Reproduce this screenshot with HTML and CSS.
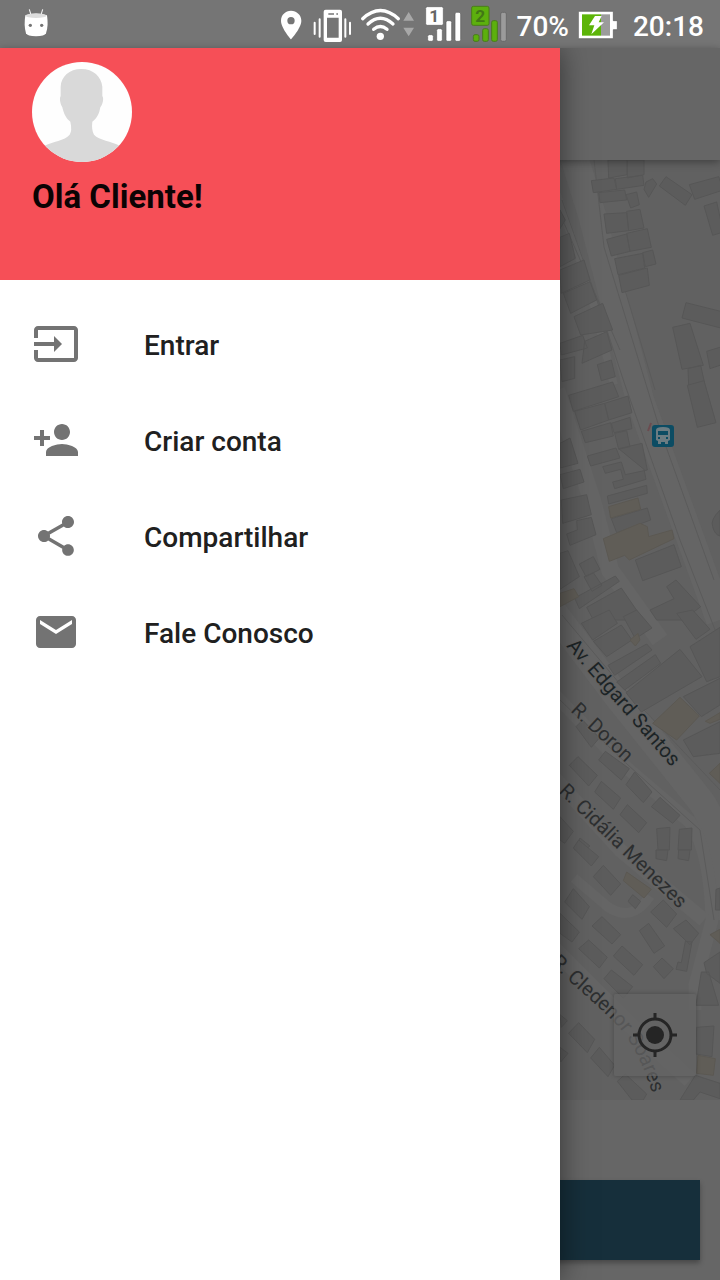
FILE: index.html
```html
<!DOCTYPE html>
<html lang="pt-BR">
<head>
<meta charset="utf-8">
<meta name="viewport" content="width=device-width, initial-scale=1">
<title>Menu</title>
<link rel="stylesheet" href="styles.css">
</head>
<body>
<div class="screen">
  <header class="status">
    <svg class="status-app" viewBox="66 0 84 144" aria-hidden="true">
      <path d="M88 28l5 17M128 28l-5 17" stroke="#fff" stroke-width="3"/>
      <path d="M76 46Q108 36 141 46Q146 78 138 100Q134 109 108 109Q82 109 78 100Q71 78 76 46Z" fill="#fff"/>
      <ellipse cx="108" cy="47" rx="31" ry="7" fill="#ddd"/>
      <circle cx="91" cy="76" r="5" fill="#757575"/><circle cx="125" cy="76" r="5" fill="#757575"/>
    </svg>
    <div class="status-icons">
      <svg width="28" height="48" viewBox="30 0 84 144" aria-hidden="true">
        <path fill="#fff" fill-rule="evenodd" d="M63 32C46 32 33 45 33 62C33 84 63 118 63 118S94 84 94 62C94 45 80 32 63 32ZM63 51a11 11 0 1 1 0 22a11 11 0 1 1 0-22Z"/>
      </svg>
      <svg width="48" height="48" viewBox="114 0 144 144" aria-hidden="true">
        <path d="M134 68v34M149 58v52M226 58v52M240 68v34" stroke="#fff" stroke-width="6" stroke-linecap="round"/>
        <path fill="#fff" fill-rule="evenodd" d="M167 29h43q6 0 6 6v85q0 6-6 6h-43q-6 0-6-6V35q0-6 6-6ZM171 53v60h35V53ZM175 40v4h17v-4ZM199 40v4h5v-4Z"/>
      </svg>
      <svg width="64" height="48" viewBox="258 0 192 144" aria-hidden="true">
        <g fill="none" stroke="#fff" stroke-width="10" stroke-linecap="round">
          <path d="M278 56Q331 7 385 56M294 72Q331 38 369 72M311 88Q331 71 351 88"/>
        </g>
        <circle cx="331" cy="109" r="11" fill="#fff"/>
        <path d="M416 36l16 26h-32ZM400 83h32l-16 26Z" fill="#a8a8a8"/>
      </svg>
      <svg class="sim" width="46" height="48" viewBox="450 0 138 144" aria-hidden="true">
        <g fill="#fff" stroke="#5d5d5d" stroke-width="2">
          <rect x="467" y="20" width="53" height="56" rx="5"/>
          <rect x="473" y="104" width="17" height="20" rx="5"/><rect x="500" y="86" width="17" height="38" rx="5"/><rect x="528" y="62" width="17" height="62" rx="5"/><rect x="555" y="37" width="17" height="87" rx="5"/>
        </g>
        <text x="493" y="67" fill="#666">1</text>
      </svg>
      <svg class="sim" width="48" height="48" viewBox="588 0 144 144" aria-hidden="true">
        <g fill="#5cb00d" stroke="#4a7d1b" stroke-width="3">
          <rect x="605" y="19" width="52" height="57" rx="5"/>
          <rect x="610" y="104" width="17" height="20" rx="5"/><rect x="638" y="86" width="17" height="38" rx="5"/><rect x="665" y="62" width="17" height="62" rx="5"/>
          <rect x="692" y="37" width="17" height="87" rx="5" fill="#9b9b9b" stroke="#696969"/>
        </g>
        <text x="631" y="67" fill="#427816">2</text>
      </svg>
    </div>
    <span>70%</span>
    <svg width="40" height="48" viewBox="354 0 120 144" aria-hidden="true">
      <path d="M355 34h105v28h12v27h-12v27H355Z" fill="#fff" stroke="#555" stroke-width="2"/>
      <path d="M366 43h57v64h-57Z" fill="#5cb408"/><path d="M423 43h27v64h-27Z" fill="#9b9b9b"/>
      <path d="M405 48h20l-9 19h16l-38 36l9-27h-16Z" fill="#fff"/>
    </svg>
    <time>20:18</time>
  </header>

  <div class="stage">
    <main class="page">
      <div class="toolbar"></div>
      <section class="map">
        <svg class="map-art" viewBox="0 160 720 940" preserveAspectRatio="xMaxYMin slice" role="img" aria-label="Mapa">
          <defs>
            <path id="cledenor" d="M550 963C580 992 596 1004 614 1022Q638 1046 653 1096V1110"/>
          </defs>
          <g class="roads">
            <path d="M572 150L592 215L640 400L720 620" stroke-width="28"/>
            <path d="M552 180L590 290L614 385" stroke-width="8"/>
            <path d="M556 390L592 500L610 570L660 640" stroke-width="18"/>
            <path d="M552 610L620 700L700 800Q724 830 720 920" stroke-width="27"/>
            <path d="M550 690L620 762L690 822Q710 850 712 920L695 985V1010" stroke-width="13"/>
            <path d="M552 775L620 850L704 920" stroke-width="14"/>
            <path d="M574 878L608 907Q632 923 650 896" stroke-width="10"/>
            <path d="M550 945L625 1020L690 1080" stroke-width="16"/>
          </g>
          <g class="lines">
            <path d="M594 160L604 247L660 430L714 580M562 200L592 285L625 385L680 540L719 640"/>
            <path d="M556 205L620 350M625 290L655 390"/>
            <path d="M562 615L625 690L720 790M560 700L628 765L700 830L714 920"/>
          </g>
          <g class="buildings" transform="translate(540 150) scale(.33333)">
            <path d="M204 30H262V74L206 84ZM262 30H312V74L262 84ZM154 92L222 84L230 118L160 128ZM226 86L308 76L312 106L230 118ZM176 128L254 120L260 150L180 158ZM258 134L290 126L298 164L272 174ZM318 96L338 86L350 102L326 142L312 118Z"/>
            <path d="M378 80L456 134L436 166L358 108ZM448 104L536 80L550 120L464 148ZM492 168L530 156L550 246L518 256Z"/>
            <path d="M192 192L260 188L266 242L200 250ZM260 184L300 178L312 234L266 242ZM200 268L260 252L270 304L214 318ZM260 250L322 236L334 292L270 304ZM224 326L308 310L314 354L234 374ZM308 308L338 300L348 342L316 350ZM236 376L322 354L328 406L246 428Z"/>
            <path d="M438 458L550 486V536L426 504ZM398 532L450 520L490 646L426 658ZM500 604L546 590V644L510 656ZM444 656L482 646L494 700L446 706Z"/>
            <path d="M60 180L76 210L60 236ZM60 262L88 250L106 325L60 350ZM60 360L132 330L150 390L64 430ZM70 430L150 395L170 450L92 490ZM102 500L188 460L218 540L122 555ZM60 580L128 556L142 594L64 615ZM134 574L200 545L216 600L126 640ZM60 630L104 620V685L66 695ZM172 644L214 630L226 680L184 692Z"/>
          </g>
          <g class="buildings" transform="translate(540 380) scale(.33333)">
            <path d="M86 46L218 6L236 50L100 94ZM104 94L194 70L206 120L122 150ZM194 70L264 48L276 98L206 120ZM124 154L212 128L220 168L136 188ZM214 130L270 112L276 146L222 158ZM224 160L260 152L270 200L236 208ZM142 228L228 204L240 234L152 258ZM236 206L306 190L322 270L256 284L244 246L188 260L196 280L242 268L250 298L218 306L224 326L318 298L312 268Z"/>
            <path d="M202 348L320 316L322 340L206 372ZM214 416L322 384L332 420L230 458ZM286 540L402 494L424 560L308 602ZM442 16L492 2L528 128L472 142Z"/>
            <path d="M60 190L90 174L114 250L60 264ZM60 284L120 268L132 306L70 326ZM64 360L140 344L154 404L68 430ZM80 462L112 450L110 422L154 412L168 464L90 496ZM60 520L84 512L118 590L60 628ZM118 552L160 530L180 568L138 590ZM132 590L160 578L186 616L156 634ZM104 654L226 588L238 604L118 686ZM140 682L244 624L310 720H160ZM330 690L402 656L380 620L408 600L482 680L430 720H350Z"/>
            <path d="M540 390Q510 420 518 440Q524 464 540 468Z"/>
            <path class="sand" d="M206 380L294 354L302 388L212 414ZM190 476L300 430L322 440L326 470L396 450L402 476L268 540L254 526L208 544ZM60 640L102 626L116 650L60 680Z"/>
          </g>
          <g class="buildings" transform="translate(540 610) scale(.33333)">
            <path d="M124 40L208 0L232 40L158 90ZM160 94L244 45L276 90L200 140ZM250 20L290 0L336 54L286 86ZM204 166L320 102L336 120L224 196ZM230 216L346 134L362 160L254 240ZM258 248L420 118L486 200L304 306ZM410 10L458 0L510 58L468 88ZM450 110L540 52V200L500 215ZM430 260L540 205V285L484 320ZM430 390L540 335V430L460 440Z"/>
            <path class="sand" d="M270 90L294 70L300 90L286 108ZM338 340L420 262L478 318L410 390ZM496 334L540 308V328L510 340ZM508 490L540 460V520Z"/>
            <path d="M108 350L128 330L178 384L154 412ZM114 440L172 496L146 528L88 466ZM196 424L268 476L244 510L176 450ZM284 486L336 546L310 578L258 524ZM184 514L242 564L220 598L164 546ZM360 562L420 616L398 640L334 590ZM262 584L320 638L296 668L240 614ZM350 656L390 652L388 720H354ZM418 658L456 654L454 720H414ZM60 620L100 664L74 700L60 690ZM120 684L150 708L135 720H104Z"/>
          </g>
          <g class="buildings" transform="translate(540 840) scale(.33333)">
            <path d="M116 0L176 50L154 78L100 24ZM190 76L242 132L212 166L160 110ZM348 30H384L380 62L348 56ZM416 30H450L446 62L414 56ZM100 146L148 200L126 238L74 186ZM60 220L118 276L96 306L60 280ZM186 230L242 284L216 312L156 258ZM278 164L302 184L286 206L264 184ZM370 180L410 222L380 262L332 216ZM326 250L374 318L342 340L298 272ZM438 240L476 280L450 314L400 266ZM146 300L202 352L178 384L116 326ZM246 318L308 374L282 406L220 348ZM366 354L400 386L372 416L340 380ZM436 304L456 306L440 394L408 388L414 366L424 368ZM214 390L278 440L250 475L192 416ZM528 148L540 144V210H526ZM492 368L540 336V430L500 400ZM484 396H506L536 496H468ZM470 562L522 558L516 650L468 642ZM116 548L164 598L142 638L86 580ZM178 622L224 676L204 710L152 654ZM60 524L82 542L64 562ZM60 622L84 640L62 666ZM256 702L320 762L310 780H276L232 724ZM466 706L540 730V776L480 756L460 780H420Z"/>
            <path class="sand" d="M260 96L334 148L312 174L250 122ZM474 646L526 656L520 706L470 700ZM510 284L540 268V310Z"/>
          </g>
          <g class="road-names">
            <text transform="translate(566 646) rotate(49)" class="main-road">Av. Edgard Santos</text>
            <text transform="translate(570 711) rotate(43)">R. Doron</text>
            <text transform="translate(558 792) rotate(44)">R. Cidália Menezes</text>
            <text><textPath href="#cledenor">R. Cledenor Soares</textPath></text>
          </g>
          <path d="M648 431l3-8" stroke="#6c4b4f" stroke-width="2"/>
          <g transform="translate(652 425)">
            <rect width="22" height="22" rx="3" fill="#0c4c63"/>
            <path fill="#6c7c82" fill-rule="evenodd" d="M4 5Q4 2 11 2T18 5V15L16 16V19H13V17H9V19H6V16L4 15ZM6 6V10H16V6ZM6 12v2h2v-2ZM14 12v2h2v-2Z"/>
          </g>
        </svg>
        <button class="locate" type="button" aria-label="Minha localização">
          <svg width="48" height="48" viewBox="0 0 48 48" aria-hidden="true">
            <circle cx="24" cy="24" r="16" fill="none" stroke="#252525" stroke-width="3"/>
            <circle cx="24" cy="24" r="9" fill="#252525"/>
            <path d="M24 2v7M24 39v7M2 24h7M39 24h7" stroke="#252525" stroke-width="3"/>
          </svg>
        </button>
      </section>
      <footer class="action-bar"><button class="action" type="button" aria-label="Continuar"></button></footer>
    </main>

    <aside class="drawer">
      <div class="profile">
        <svg class="avatar" viewBox="0 0 300 300" aria-hidden="true">
          <defs><clipPath id="round"><circle cx="150" cy="150" r="150"/></clipPath></defs>
          <g clip-path="url(#round)">
            <path d="M0 0H300V300H0Z" fill="#fefefe"/>
            <path fill="#d9d9d9" d="M148 21C112 21 87 44 86 74V102C82 108 84 124 91 136C95 154 102 170 115 179Q121 206 113 218C98 236 62 238 36 252V300H264V252C238 236 202 236 186 218Q178 204 181 179C196 169 202 153 205 136C213 126 216 108 211 102V74C208 44 184 21 148 21Z"/>
          </g>
        </svg>
        <h1 class="greeting">Olá Cliente!</h1>
      </div>
      <nav class="menu">
        <a class="menu-item" href="#entrar">
          <svg viewBox="0 0 24 24" aria-hidden="true"><path d="M21 3.01H3c-1.100 0-2 .9-2 2V9h2V4.990h18v14.030H3V15H1v4.010c0 1.100.9 1.980 2 1.980h18c1.100 0 2-.88 2-1.980v-14c0-1.110-.9-2-2-2zM11 16l4-4-4-4v3H1v2h10v3z"/></svg>
          <span>Entrar</span>
        </a>
        <a class="menu-item" href="#criar-conta">
          <svg viewBox="0 0 24 24" aria-hidden="true"><path d="M15 12c2.210 0 4-1.790 4-4s-1.790-4-4-4-4 1.790-4 4 1.790 4 4 4zm-9-2V7H4v3H1v2h3v3h2v-3h3v-2H6zm9 4c-2.670 0-8 1.340-8 4v2h16v-2c0-2.660-5.330-4-8-4z"/></svg>
          <span>Criar conta</span>
        </a>
        <a class="menu-item" href="#compartilhar">
          <svg viewBox="0 0 24 24" aria-hidden="true"><path d="M18 16.080c-.76 0-1.440.3-1.960.77L8.910 12.700c.05-.23.09-.46.09-.7s-.04-.47-.09-.7l7.050-4.110c.54.5 1.250.81 2.040.81 1.660 0 3-1.340 3-3s-1.340-3-3-3-3 1.340-3 3c0 .24.04.47.09.7L8.040 9.810C7.500 9.310 6.790 9 6 9c-1.660 0-3 1.340-3 3s1.340 3 3 3c.79 0 1.500-.31 2.040-.81l7.120 4.160c-.05.21-.08.43-.08.65 0 1.610 1.310 2.920 2.920 2.920s2.920-1.310 2.920-2.920-1.310-2.920-2.920-2.920z"/></svg>
          <span>Compartilhar</span>
        </a>
        <a class="menu-item" href="#fale-conosco">
          <svg viewBox="0 0 24 24" aria-hidden="true"><path d="M20 4H4c-1.100 0-1.990.9-1.990 2L2 18c0 1.100.9 2 2 2h16c1.100 0 2-.9 2-2V6c0-1.100-.9-2-2-2zm0 4l-8 5-8-5V6l8 5 8-5v2z"/></svg>
          <span>Fale Conosco</span>
        </a>
      </nav>
    </aside>
  </div>
</div>
</body>
</html>
```
FILE: styles.css
```css
* { box-sizing: border-box; }

body {
  margin: 0;
  background: #666;
  font-family: Roboto, "Noto Sans", sans-serif;
}

button { border: 0; padding: 0; font: inherit; }

.screen {
  display: flex;
  flex-direction: column;
  min-height: 100vh;
}

.status {
  display: flex;
  align-items: center;
  height: 48px;
  padding: 0 16px 0 22px;
  background: #757575;
  color: #fff;
  font-size: 28px;
  line-height: 32px;
  font-weight: 500;
}

.status > svg,
.status-icons svg { display: block; flex: none; }

.status-app {
  width: 28px;
  height: 48px;
  margin-right: auto;
}

.status-icons {
  display: flex;
  margin-right: 3px;
}

.status > span { margin-right: 9px; padding-top: 6px; }

.status > time { margin-left: 15px; padding-top: 6px; }

.sim text {
  font-size: 52px;
  font-weight: 700;
  text-anchor: middle;
}

.stage {
  display: grid;
  flex: 1;
}

.page,
.drawer { grid-area: 1 / 1; }

.page {
  display: flex;
  flex-direction: column;
  min-width: 0;
}

.toolbar {
  z-index: 1;
  height: 112px;
  background: #666;
  box-shadow: 0 2px 8px rgba(0, 0, 0, 0.35);
}

.map {
  position: relative;
  flex: 1;
  min-height: 320px;
  background: #616161;
}

.map-art {
  position: absolute;
  inset: 0;
  width: 100%;
  height: 100%;
}

.roads {
  fill: none;
  stroke: #656565;
  stroke-linejoin: round;
}

.lines {
  fill: none;
  stroke: #5b5b5b;
}

.buildings {
  fill: #5c5c5c;
  stroke: #565656;
  stroke-width: 3;
}

.sand {
  fill: #605d57;
  stroke: #5b5852;
}

.road-names {
  font-size: 20px;
  fill: #2d2f30;
  stroke: #636363;
  stroke-width: 2;
  paint-order: stroke;
}

.main-road { fill: #1c2426; }

.locate {
  position: absolute;
  right: 24px;
  bottom: 24px;
  display: grid;
  place-items: center;
  width: 82px;
  height: 82px;
  border-radius: 2px;
  background: rgba(100, 100, 100, 0.75);
  box-shadow: 0 0 4px rgba(0, 0, 0, 0.25);
}

.action-bar {
  padding: 80px 20px 20px;
  background: #666;
}

.action {
  display: block;
  width: 100%;
  height: 80px;
  background: #162f3b;
  box-shadow: 0 3px 5px rgba(0, 0, 0, 0.3);
}

.drawer {
  z-index: 2;
  width: 560px;
  max-width: calc(100% - 56px);
  background: #fff;
  box-shadow: 0 0 28px rgba(0, 0, 0, 0.5);
  clip-path: inset(0 -48px 0 0);
}

.profile {
  height: 232px;
  padding: 14px 32px;
  background: #f64f57;
}

.avatar {
  display: block;
  width: 100px;
  height: 100px;
}

.greeting {
  margin: 15px 0 0;
  color: #0b0304;
  font-size: 33px;
  line-height: 40px;
  font-weight: 700;
}

.menu { padding: 16px 0; }

.menu-item {
  display: flex;
  align-items: center;
  gap: 64px;
  height: 96px;
  padding: 0 32px;
  color: #202020;
  font-size: 28px;
  line-height: 32px;
  font-weight: 500;
  text-decoration: none;
}

.menu-item span { padding-top: 4px; }

.menu-item svg {
  flex: none;
  width: 48px;
  height: 48px;
  fill: #737373;
}
```
